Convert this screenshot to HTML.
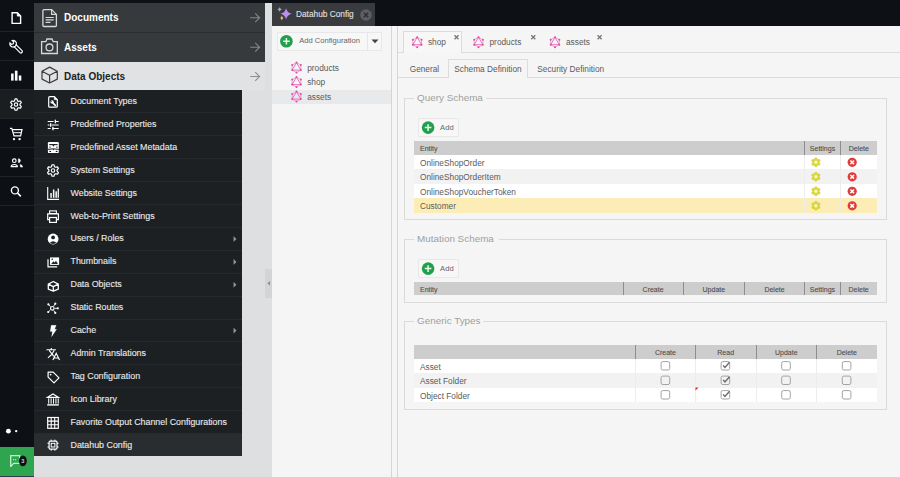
<!DOCTYPE html>
<html><head><meta charset="utf-8"><style>
*{box-sizing:border-box;margin:0;padding:0}
html,body{width:900px;height:477px;overflow:hidden;background:#0d1014;font-family:"Liberation Sans",sans-serif;position:relative}
.a{position:absolute}
.t{position:absolute;white-space:nowrap;line-height:1}
.mmt{font-size:10px;font-weight:bold;color:#fff}
.smt{font-size:8.9px;color:#e8e8e8;-webkit-text-stroke:0.12px #e8e8e8}
.txt{font-size:8.3px;color:#5a5a5a}
.leg{font-size:9.9px;color:#9f9f9f}
.ght{font-size:7px;color:#4a4a4a;-webkit-text-stroke:0.08px #4a4a4a}
.btnt{font-size:7.6px;color:#666}
.btn{position:absolute;background:#f7f7f7;border:1px solid #e8e8e8;border-radius:1px}
.fs{position:absolute;border:1px solid #dadada}
</style></head><body>
<div class="a" style="left:0px;top:0px;width:34px;height:477px;background:#0d1014"></div>
<div class="a" style="left:0px;top:31px;width:34px;height:1px;background:#1f2326"></div>
<div class="a" style="left:0px;top:60px;width:34px;height:1px;background:#1f2326"></div>
<div class="a" style="left:0px;top:89px;width:34px;height:1px;background:#1f2326"></div>
<div class="a" style="left:0px;top:118px;width:34px;height:1px;background:#1f2326"></div>
<div class="a" style="left:0px;top:147px;width:34px;height:1px;background:#1f2326"></div>
<div class="a" style="left:0px;top:176px;width:34px;height:1px;background:#1f2326"></div>
<div class="a" style="left:0px;top:205px;width:34px;height:1px;background:#1f2326"></div>
<div class="a" style="left:0px;top:90px;width:34px;height:28px;background:#1b1e21"></div>
<div class="a" style="left:0px;top:447px;width:34px;height:29px;background:#2fa54f"></div>
<div class="a" style="left:0px;top:476px;width:34px;height:1px;background:#2a3a48"></div>
<div class="a" style="left:34px;top:3px;width:239px;height:474px;background:#dedfe1"></div>
<div class="a" style="left:34px;top:3px;width:231px;height:59px;background:#373a3c"></div>
<div class="a" style="left:34px;top:32px;width:231px;height:1px;background:#2b2d30"></div>
<div class="a" style="left:34px;top:61.8px;width:231px;height:28.2px;background:#e1e2e4"></div>
<span class="t mmt" style="left:64px;top:13px;">Documents</span>
<span class="t mmt" style="left:64px;top:42.6px;">Assets</span>
<span class="t mmt" style="left:64px;top:71.8px;color:#222">Data Objects</span>
<div class="a" style="left:34px;top:90px;width:208px;height:366px;background:#1d2023"></div>
<span class="t smt" style="left:70.5px;top:97.0px;">Document Types</span>
<div class="a" style="left:34px;top:112.4px;width:208px;height:1px;background:#26292d"></div>
<span class="t smt" style="left:70.5px;top:119.9px;">Predefined Properties</span>
<div class="a" style="left:34px;top:135.3px;width:208px;height:1px;background:#26292d"></div>
<span class="t smt" style="left:70.5px;top:142.8px;">Predefined Asset Metadata</span>
<div class="a" style="left:34px;top:158.2px;width:208px;height:1px;background:#26292d"></div>
<span class="t smt" style="left:70.5px;top:165.7px;">System Settings</span>
<div class="a" style="left:34px;top:181.1px;width:208px;height:1px;background:#26292d"></div>
<span class="t smt" style="left:70.5px;top:188.6px;">Website Settings</span>
<div class="a" style="left:34px;top:204.0px;width:208px;height:1px;background:#26292d"></div>
<span class="t smt" style="left:70.5px;top:211.5px;">Web-to-Print Settings</span>
<div class="a" style="left:34px;top:226.9px;width:208px;height:1px;background:#26292d"></div>
<span class="t smt" style="left:70.5px;top:234.4px;">Users / Roles</span>
<div class="a" style="left:34px;top:249.8px;width:208px;height:1px;background:#26292d"></div>
<span class="t smt" style="left:70.5px;top:257.3px;">Thumbnails</span>
<div class="a" style="left:34px;top:272.7px;width:208px;height:1px;background:#26292d"></div>
<span class="t smt" style="left:70.5px;top:280.2px;">Data Objects</span>
<div class="a" style="left:34px;top:295.6px;width:208px;height:1px;background:#26292d"></div>
<span class="t smt" style="left:70.5px;top:303.1px;">Static Routes</span>
<div class="a" style="left:34px;top:318.5px;width:208px;height:1px;background:#26292d"></div>
<span class="t smt" style="left:70.5px;top:326.0px;">Cache</span>
<div class="a" style="left:34px;top:341.4px;width:208px;height:1px;background:#26292d"></div>
<span class="t smt" style="left:70.5px;top:348.9px;">Admin Translations</span>
<div class="a" style="left:34px;top:364.3px;width:208px;height:1px;background:#26292d"></div>
<span class="t smt" style="left:70.5px;top:371.8px;">Tag Configuration</span>
<div class="a" style="left:34px;top:387.2px;width:208px;height:1px;background:#26292d"></div>
<span class="t smt" style="left:70.5px;top:394.7px;">Icon Library</span>
<div class="a" style="left:34px;top:410.1px;width:208px;height:1px;background:#26292d"></div>
<span class="t smt" style="left:70.5px;top:417.6px;">Favorite Output Channel Configurations</span>
<div class="a" style="left:34px;top:433.5px;width:208px;height:22.5px;background:#2a2d30"></div>
<div class="a" style="left:34px;top:433.0px;width:208px;height:1px;background:#26292d"></div>
<span class="t smt" style="left:70.5px;top:440.5px;">Datahub Config</span>
<div class="a" style="left:265px;top:268.8px;width:7px;height:29px;background:#d3d4d6"></div>
<div class="a" style="left:271.6px;top:26px;width:628.4px;height:451px;background:#f5f5f5"></div>
<div class="a" style="left:272px;top:3px;width:103px;height:23px;background:#393b3e"></div>
<span class="t smt" style="left:296px;top:9.8px;font-size:8.3px;color:#dedede">Datahub Config</span>
<div class="a" style="left:391px;top:26px;width:1px;height:451px;background:#d5d5d5"></div>
<div class="a" style="left:397px;top:26px;width:1px;height:451px;background:#d5d5d5"></div>
<div class="btn" style="left:277px;top:32px;width:105px;height:18.5px"></div>
<div class="a" style="left:367px;top:32.5px;width:1px;height:17.5px;background:#e6e6e6"></div>
<span class="t btnt" style="left:299.2px;top:37.3px;">Add Configuration</span>
<div class="a" style="left:272px;top:89.5px;width:119px;height:14.5px;background:#e8e9eb"></div>
<span class="t txt" style="left:307.2px;top:63.5px;">products</span>
<span class="t txt" style="left:307.2px;top:78px;">shop</span>
<span class="t txt" style="left:307.2px;top:92.5px;">assets</span>
<div class="a" style="left:398px;top:52.3px;width:502px;height:1px;background:#dcdcdc"></div>
<div class="a" style="left:403.3px;top:31.2px;width:58.5px;height:22.1px;background:#f7f7f7;border:1px solid #dcdcdc;border-bottom:none"></div>
<span class="t txt" style="left:427.9px;top:38.2px;">shop</span>
<span class="t txt" style="left:489.5px;top:38.2px;">products</span>
<span class="t txt" style="left:566px;top:38.2px;">assets</span>
<div class="a" style="left:398px;top:77px;width:502px;height:1px;background:#dcdcdc"></div>
<div class="a" style="left:447.6px;top:59px;width:80px;height:18.5px;background:#f5f5f5;border:1px solid #dcdcdc;border-bottom:none"></div>
<span class="t txt" style="left:409.7px;top:64.8px;">General</span>
<span class="t txt" style="left:454.3px;top:64.8px;">Schema Definition</span>
<span class="t txt" style="left:537.3px;top:64.8px;">Security Definition</span>
<div class="fs" style="left:404px;top:98.3px;width:483.0px;height:121.7px"></div>
<div class="a" style="left:414px;top:97.3px;width:71.5px;height:3px;background:#f5f5f5"></div>
<span class="t leg" style="left:417px;top:93.2px;">Query Schema</span>
<div class="btn" style="left:417.6px;top:118px;width:41.5px;height:19px"></div>
<span class="t btnt" style="left:440.1px;top:123.7px;">Add</span>
<div class="a" style="left:414px;top:141.2px;width:463px;height:13.5px;background:#cdcdcd"></div>
<div class="a" style="left:804.0px;top:141.2px;width:1px;height:13.5px;background:#8d8d8d"></div>
<div class="a" style="left:840.0px;top:141.2px;width:1px;height:13.5px;background:#8d8d8d"></div>
<span class="t ght" style="left:420px;top:145.3px;">Entity</span>
<span class="t ght" style="left:804.5px;top:145.3px;width:36.0px;text-align:center">Settings</span>
<span class="t ght" style="left:840.5px;top:145.3px;width:36.5px;text-align:center">Delete</span>
<div class="a" style="left:414px;top:154.7px;width:463px;height:14.5px;background:#fff"></div>
<div class="a" style="left:804.0px;top:154.7px;width:1px;height:14.5px;background:#ededed"></div>
<div class="a" style="left:840.0px;top:154.7px;width:1px;height:14.5px;background:#ededed"></div>
<span class="t txt" style="left:420px;top:158.7px;">OnlineShopOrder</span>
<div class="a" style="left:414px;top:169.2px;width:463px;height:14.5px;background:#f2f2f2"></div>
<div class="a" style="left:804.0px;top:169.2px;width:1px;height:14.5px;background:#ededed"></div>
<div class="a" style="left:840.0px;top:169.2px;width:1px;height:14.5px;background:#ededed"></div>
<span class="t txt" style="left:420px;top:173.2px;">OnlineShopOrderItem</span>
<div class="a" style="left:414px;top:183.7px;width:463px;height:14.5px;background:#fff"></div>
<div class="a" style="left:804.0px;top:183.7px;width:1px;height:14.5px;background:#ededed"></div>
<div class="a" style="left:840.0px;top:183.7px;width:1px;height:14.5px;background:#ededed"></div>
<span class="t txt" style="left:420px;top:187.7px;">OnlineShopVoucherToken</span>
<div class="a" style="left:414px;top:198.2px;width:463px;height:14.5px;background:#fcedb6"></div>
<div class="a" style="left:804.0px;top:198.2px;width:1px;height:14.5px;background:#ededed"></div>
<div class="a" style="left:840.0px;top:198.2px;width:1px;height:14.5px;background:#ededed"></div>
<span class="t txt" style="left:420px;top:202.2px;">Customer</span>
<div class="fs" style="left:404px;top:239.2px;width:483.0px;height:63.8px"></div>
<div class="a" style="left:414.2px;top:238.2px;width:84.69999999999999px;height:3px;background:#f5f5f5"></div>
<span class="t leg" style="left:417px;top:234.1px;">Mutation Schema</span>
<div class="btn" style="left:417.6px;top:259px;width:41.5px;height:19px"></div>
<span class="t btnt" style="left:440.1px;top:264.7px;">Add</span>
<div class="a" style="left:414px;top:281.7px;width:463px;height:13.5px;background:#cdcdcd"></div>
<div class="a" style="left:622.5px;top:281.7px;width:1px;height:13.5px;background:#8d8d8d"></div>
<div class="a" style="left:682.7px;top:281.7px;width:1px;height:13.5px;background:#8d8d8d"></div>
<div class="a" style="left:744.0px;top:281.7px;width:1px;height:13.5px;background:#8d8d8d"></div>
<div class="a" style="left:804.0px;top:281.7px;width:1px;height:13.5px;background:#8d8d8d"></div>
<div class="a" style="left:839.8px;top:281.7px;width:1px;height:13.5px;background:#8d8d8d"></div>
<span class="t ght" style="left:420px;top:285.8px;">Entity</span>
<span class="t ght" style="left:623px;top:285.8px;width:60.2px;text-align:center">Create</span>
<span class="t ght" style="left:683.2px;top:285.8px;width:61.3px;text-align:center">Update</span>
<span class="t ght" style="left:744.5px;top:285.8px;width:60.0px;text-align:center">Delete</span>
<span class="t ght" style="left:804.5px;top:285.8px;width:35.8px;text-align:center">Settings</span>
<span class="t ght" style="left:840.3px;top:285.8px;width:36.7px;text-align:center">Delete</span>
<div class="fs" style="left:404px;top:321.3px;width:483.0px;height:88.7px"></div>
<div class="a" style="left:414px;top:320.3px;width:69px;height:3px;background:#f5f5f5"></div>
<span class="t leg" style="left:417px;top:316.2px;">Generic Types</span>
<div class="a" style="left:414px;top:345.1px;width:463px;height:13.5px;background:#cdcdcd"></div>
<div class="a" style="left:634.9px;top:345.1px;width:1px;height:13.5px;background:#8d8d8d"></div>
<div class="a" style="left:694.9px;top:345.1px;width:1px;height:13.5px;background:#8d8d8d"></div>
<div class="a" style="left:755.5px;top:345.1px;width:1px;height:13.5px;background:#8d8d8d"></div>
<div class="a" style="left:816.1px;top:345.1px;width:1px;height:13.5px;background:#8d8d8d"></div>
<span class="t ght" style="left:635.4px;top:349.2px;width:60.0px;text-align:center">Create</span>
<span class="t ght" style="left:695.4px;top:349.2px;width:60.6px;text-align:center">Read</span>
<span class="t ght" style="left:756px;top:349.2px;width:60.6px;text-align:center">Update</span>
<span class="t ght" style="left:816.6px;top:349.2px;width:60.4px;text-align:center">Delete</span>
<div class="a" style="left:414px;top:358.6px;width:463px;height:14.5px;background:#fff"></div>
<div class="a" style="left:634.9px;top:358.6px;width:1px;height:14.5px;background:#ededed"></div>
<div class="a" style="left:694.9px;top:358.6px;width:1px;height:14.5px;background:#ededed"></div>
<div class="a" style="left:755.5px;top:358.6px;width:1px;height:14.5px;background:#ededed"></div>
<div class="a" style="left:816.1px;top:358.6px;width:1px;height:14.5px;background:#ededed"></div>
<span class="t txt" style="left:420px;top:362.6px;">Asset</span>
<div class="a" style="left:414px;top:373.1px;width:463px;height:14.5px;background:#f2f2f2"></div>
<div class="a" style="left:634.9px;top:373.1px;width:1px;height:14.5px;background:#ededed"></div>
<div class="a" style="left:694.9px;top:373.1px;width:1px;height:14.5px;background:#ededed"></div>
<div class="a" style="left:755.5px;top:373.1px;width:1px;height:14.5px;background:#ededed"></div>
<div class="a" style="left:816.1px;top:373.1px;width:1px;height:14.5px;background:#ededed"></div>
<span class="t txt" style="left:420px;top:377.1px;">Asset Folder</span>
<div class="a" style="left:414px;top:387.6px;width:463px;height:14.5px;background:#fff"></div>
<div class="a" style="left:634.9px;top:387.6px;width:1px;height:14.5px;background:#ededed"></div>
<div class="a" style="left:694.9px;top:387.6px;width:1px;height:14.5px;background:#ededed"></div>
<div class="a" style="left:755.5px;top:387.6px;width:1px;height:14.5px;background:#ededed"></div>
<div class="a" style="left:816.1px;top:387.6px;width:1px;height:14.5px;background:#ededed"></div>
<span class="t txt" style="left:420px;top:391.6px;">Object Folder</span>
<svg class="a" style="left:0;top:0" width="900" height="477" viewBox="0 0 900 477"><path d="M12.1,12.8 L17.3,12.8 L20.6,16.1 L20.6,23.4 L12.1,23.4 Z" stroke="#fff" stroke-width="1.4" fill="none" /><path d="M17.3,12.8 L17.3,16.1 L20.6,16.1 Z" stroke="#fff" stroke-width="0.8" fill="#fff" /><g transform="rotate(-45 16.6 47.2)"><path d="M15.2,44.6 L15.2,53.5 Q15.2,54.7 16.6,54.7 Q18,54.7 18,53.5 L18,44.6" stroke="#fff" stroke-width="1.2" fill="none" /><path d="M15,39.4 A3.3,3.3 0 1 0 18.2,39.4 L18.2,41.5 L16.6,42.4 L15,41.5 Z" stroke="#fff" stroke-width="1.2" fill="none" /></g><rect x="11.1" y="73.5" width="2.5" height="7.1" rx="0" stroke="none" stroke-width="1" fill="#fff"/><rect x="14.9" y="70.7" width="2.6" height="9.9" rx="0" stroke="none" stroke-width="1" fill="#fff"/><rect x="18.8" y="75.5" width="2.5" height="5.1" rx="0" stroke="none" stroke-width="1" fill="#fff"/><path d="M19.97,105.10 L21.32,106.64 L20.43,108.19 L18.42,107.79 L17.55,108.29 L16.89,110.23 L15.11,110.23 L14.45,108.29 L13.58,107.79 L11.57,108.19 L10.68,106.64 L12.03,105.10 L12.03,104.10 L10.68,102.56 L11.57,101.01 L13.58,101.41 L14.45,100.91 L15.11,98.97 L16.89,98.97 L17.55,100.91 L18.42,101.41 L20.43,101.01 L21.32,102.56 L19.97,104.10 Z" stroke="#fff" stroke-width="1.2" fill="none" stroke-linejoin="round"/><circle cx="16" cy="104.6" r="1.7" stroke="#fff" stroke-width="1.1" fill="none"/><path d="M9.9,128.4 L11.8,128.4 L14,135.8 L20.6,135.8 L22,129.6 L12.6,129.6" stroke="#fff" stroke-width="1.2" fill="none" /><path d="M13.3,132.7 L21.1,132.7" stroke="#fff" stroke-width="1.0" fill="none" /><circle cx="14" cy="139.1" r="1.2" stroke="none" stroke-width="1" fill="#fff"/><circle cx="19.6" cy="139.1" r="1.2" stroke="none" stroke-width="1" fill="#fff"/><circle cx="14.3" cy="160.7" r="1.8" stroke="#fff" stroke-width="1.2" fill="none"/><path d="M11.2,166.6 Q11.2,164.5 14.3,164.5 Q17.4,164.5 17.4,166.6 Z" stroke="#fff" stroke-width="1.1" fill="none" /><path d="M18.4,158.7 A2,2 0 0 1 18.4,162.7 Z" stroke="#fff" stroke-width="0.5" fill="#fff" /><path d="M20,164.6 Q22.6,164.8 22.6,167.1 L20.6,167.1 Z" stroke="#fff" stroke-width="0.5" fill="#fff" /><circle cx="14.9" cy="190.4" r="3.5" stroke="#fff" stroke-width="1.4" fill="none"/><path d="M17.5,193 L20.8,196.3" stroke="#fff" stroke-width="1.7" fill="none" /><circle cx="8.4" cy="431.2" r="2.4" stroke="none" stroke-width="1" fill="#fff"/><circle cx="16.2" cy="431.1" r="1.2" stroke="none" stroke-width="1" fill="#fff"/><path d="M10.7,455.7 L19.6,455.7 L19.6,463.4 L13.6,463.4 L10.9,466.4 L10.7,466.4 Z" stroke="#c2f2ca" stroke-width="1.3" fill="none" /><circle cx="13.6" cy="459.7" r="0.6" stroke="none" stroke-width="1" fill="#c2f2ca"/><circle cx="15.6" cy="459.7" r="0.6" stroke="none" stroke-width="1" fill="#c2f2ca"/><ellipse cx="22.9" cy="460.9" rx="3.9" ry="5.4" fill="#0d1014"/><text x="22.9" y="463" font-size="5.6" font-weight="bold" fill="#d0d0d8" text-anchor="middle" font-family="Liberation Sans">3</text><path d="M44,9.6 L51.6,9.6 L56.4,14.4 L56.4,25.4 Q56.4,26.5 55.3,26.5 L44,26.5 Q42.9,26.5 42.9,25.4 L42.9,10.7 Q42.9,9.6 44,9.6 Z" stroke="#d8d8d8" stroke-width="1.3" fill="none" /><path d="M51.6,9.6 L51.6,14.4 L56.4,14.4" stroke="#d8d8d8" stroke-width="1.2" fill="none" /><path d="M45.6,17.5 L53.7,17.5 M45.6,19.9 L53.7,19.9 M45.6,22.3 L50.5,22.3" stroke="#d8d8d8" stroke-width="1.2" fill="none" /><path d="M41.6,41.7 L45.8,41.7 L47,39 L52,39 L53.2,41.7 L57.3,41.7 L57.3,53.5 L41.6,53.5 Z" stroke="#d8d8d8" stroke-width="1.3" fill="none" /><circle cx="49.5" cy="47.4" r="3.4" stroke="#d8d8d8" stroke-width="1.3" fill="none"/><path d="M49.6,67.1 L57.3,71.2 L57.3,79.1 L49.6,83 L42,79.1 L42,71.2 Z M42,71.2 L49.6,75.3 L57.3,71.2 M49.6,75.3 L49.6,83" stroke="#3a3b3d" stroke-width="1.2" fill="none" stroke-linejoin="round"/><path d="M250.2,17.8 L259.6,17.8 M255.2,13.4 L259.6,17.8 L255.2,22.200000000000003" stroke="#85878a" stroke-width="1.1" fill="none" /><path d="M250.2,47.2 L259.6,47.2 M255.2,42.800000000000004 L259.6,47.2 L255.2,51.6" stroke="#85878a" stroke-width="1.1" fill="none" /><path d="M250.2,76.5 L259.6,76.5 M255.2,72.1 L259.6,76.5 L255.2,80.9" stroke="#8e8f91" stroke-width="1.1" fill="none" /><path d="M49.8,96.7 L54.3,96.7 L57.3,99.7 L57.3,106.2 Q57.3,107.2 56.3,107.2 L49.7,107.2 Q48.7,107.2 48.7,106.2 L48.7,97.8 Q48.7,96.7 49.8,96.7 Z" stroke="#fff" stroke-width="1.2" fill="none" /><path d="M54.3,96.7 L54.3,99.7 L57.3,99.7 Z" stroke="#fff" stroke-width="0.5" fill="#fff" /><path d="M52.6,102.6 L55.3,105.4" stroke="#fff" stroke-width="1.7" fill="none" stroke-linecap="round"/><circle cx="52.1" cy="101.9" r="1.7" stroke="none" stroke-width="1" fill="#fff"/><path d="M50.3,100.6 L51.6,101.9" stroke="#1d2023" stroke-width="1.0" fill="none" /><path d="M47.7,121.5 L53.6,121.5 M55.9,121.5 L58.7,121.5 M47.7,125 L49.5,125 M51.6,125 L58.7,125 M47.7,128.5 L50.7,128.5 M52.3,128.5 L58.7,128.5" stroke="#fff" stroke-width="1.1" fill="none" /><rect x="54.7" y="119.7" width="1.3" height="3.6" rx="0" stroke="none" stroke-width="1" fill="#fff"/><rect x="50" y="123.2" width="1.3" height="3.6" rx="0" stroke="none" stroke-width="1" fill="#fff"/><rect x="52.3" y="126.7" width="1.3" height="3.6" rx="0" stroke="none" stroke-width="1" fill="#fff"/><rect x="47.9" y="142" width="10.9" height="11.1" rx="1.2" stroke="none" stroke-width="1" fill="#fff"/><path d="M49.2,144.6 L57.6,144.6" stroke="#1d2023" stroke-width="1.1" fill="none" /><path d="M52,144.4 L54.8,144.4 L53.4,146.8 Z" stroke="none" stroke-width="0" fill="#1d2023" /><rect x="49.3" y="146.6" width="1.3" height="1.1" rx="0" stroke="none" stroke-width="1" fill="#1d2023"/><rect x="56.2" y="146.6" width="1.3" height="1.1" rx="0" stroke="none" stroke-width="1" fill="#1d2023"/><path d="M47.9,149.4 Q53.4,148.2 58.8,149.4" stroke="#1d2023" stroke-width="1.0" fill="none" /><path d="M52.6,149 L54.2,149 L53.4,150.4 Z" stroke="none" stroke-width="0" fill="#1d2023" /><ellipse cx="50.2" cy="151.4" rx="1" ry="0.6" fill="#1d2023"/><ellipse cx="56.6" cy="151.4" rx="1" ry="0.6" fill="#1d2023"/><path d="M57.07,171.01 L58.41,172.58 L57.51,174.15 L55.48,173.77 L54.59,174.28 L53.91,176.23 L52.09,176.23 L51.41,174.28 L50.52,173.77 L48.49,174.15 L47.59,172.58 L48.93,171.01 L48.93,169.99 L47.59,168.42 L48.49,166.85 L50.52,167.23 L51.41,166.72 L52.09,164.77 L53.91,164.77 L54.59,166.72 L55.48,167.23 L57.51,166.85 L58.41,168.42 L57.07,169.99 Z" stroke="#fff" stroke-width="1.2" fill="none" stroke-linejoin="round"/><circle cx="53" cy="170.5" r="1.7" stroke="#fff" stroke-width="1.1" fill="none"/><path d="M47.7,187 L47.7,199.4 L59.1,199.4" stroke="#fff" stroke-width="1.1" fill="none" /><rect x="50.3" y="193" width="1.5" height="4.8" rx="0" stroke="none" stroke-width="1" fill="#fff"/><rect x="52.9" y="189.5" width="1.5" height="8.3" rx="0" stroke="none" stroke-width="1" fill="#fff"/><rect x="55.4" y="191.3" width="1.5" height="6.5" rx="0" stroke="none" stroke-width="1" fill="#fff"/><rect x="57.6" y="188.5" width="1.3" height="9.3" rx="0" stroke="none" stroke-width="1" fill="#fff"/><rect x="49.6" y="210.9" width="6.8" height="2.6" rx="0" stroke="#fff" stroke-width="1.1" fill="none"/><path d="M49.4,219.6 L47.7,219.6 L47.7,213.8 L58.4,213.8 L58.4,219.6 L56.6,219.6" stroke="#fff" stroke-width="1.2" fill="none" /><rect x="49.6" y="217.5" width="6.8" height="4.9" rx="0" stroke="#fff" stroke-width="1.2" fill="none"/><circle cx="53.1" cy="239" r="5.4" stroke="none" stroke-width="1" fill="#fff"/><circle cx="53.1" cy="237.4" r="1.9" stroke="none" stroke-width="1" fill="#1d2023"/><path d="M49.6,242.8 Q53.1,239.8 56.6,242.8 Q53.1,245.2 49.6,242.8 Z" stroke="#fff" stroke-width="0.1" fill="#1d2023" /><path d="M48,259.3 L48,266.8 L57.2,266.8" stroke="#fff" stroke-width="1.2" fill="none" /><rect x="50" y="257.4" width="9.1" height="7.5" rx="0" stroke="none" stroke-width="1" fill="#fff"/><path d="M51.2,264 L53.3,261.3 L54.6,262.6 L56,260.8 L58,264 Z" stroke="#fff" stroke-width="0.1" fill="#1d2023" /><circle cx="52.2" cy="259.3" r="0.8" stroke="none" stroke-width="1" fill="#1d2023"/><path d="M53.3,281.5 L58.3,284.1 L58.3,289.2 L53.3,291.2 L48.3,289.2 L48.3,284.1 Z M48.3,284.1 L53.3,286.6 L58.3,284.1 M53.3,286.6 L53.3,291.2" stroke="#fff" stroke-width="1.3" fill="none" stroke-linejoin="round"/><circle cx="52.3" cy="308.3" r="1.8" stroke="#fff" stroke-width="1.2" fill="none"/><path d="M50.46,306.46 L48.41,304.41" stroke="#fff" stroke-width="0.9" fill="none" /><circle cx="48.41" cy="304.41" r="1.1" stroke="none" stroke-width="1" fill="#fff"/><path d="M53.72,306.12 L55.30,303.69" stroke="#fff" stroke-width="0.9" fill="none" /><circle cx="55.3" cy="303.69" r="1.1" stroke="none" stroke-width="1" fill="#fff"/><path d="M54.90,308.30 L57.80,308.30" stroke="#fff" stroke-width="0.9" fill="none" /><circle cx="57.8" cy="308.3" r="1.1" stroke="none" stroke-width="1" fill="#fff"/><path d="M53.72,310.48 L55.30,312.91" stroke="#fff" stroke-width="0.9" fill="none" /><circle cx="55.3" cy="312.91" r="1.1" stroke="none" stroke-width="1" fill="#fff"/><path d="M50.37,310.04 L48.21,311.98" stroke="#fff" stroke-width="0.9" fill="none" /><circle cx="48.21" cy="311.98" r="1.1" stroke="none" stroke-width="1" fill="#fff"/><path d="M51.2,325.3 L56.2,325.3 L54.6,329.3 L56.6,329.3 L51.6,336.7 L52.4,331.4 L50.2,331.4 Z" stroke="#fff" stroke-width="0.2" fill="#fff" /><path d="M46.4,349.7 L55.9,349.7 M51.3,348 L51.3,349.7 M49.2,350.4 L53.8,356.3 M54.2,350.4 Q52,355.2 47.9,357.9" stroke="#fff" stroke-width="1.1" fill="none" /><path d="M52.9,360 L56.2,353.3 L59.5,360 M54,358 L58.4,358" stroke="#fff" stroke-width="1.2" fill="none" /><path d="M48.1,372.1 L53.2,372.1 L59,377.9 L54,382.9 L48.1,377.1 Z" stroke="#fff" stroke-width="1.2" fill="none" stroke-linejoin="round"/><circle cx="50.6" cy="374.6" r="0.9" stroke="none" stroke-width="1" fill="#fff"/><path d="M47.6,397.3 L53,393.9 L58.4,397.3 Z" stroke="#fff" stroke-width="1.2" fill="none" /><rect x="47.2" y="404.2" width="11.6" height="1.4" rx="0" stroke="none" stroke-width="1" fill="#fff"/><rect x="48.2" y="398.3" width="1.05" height="5.4" rx="0" stroke="none" stroke-width="1" fill="#fff"/><rect x="50.6" y="398.3" width="1.05" height="5.4" rx="0" stroke="none" stroke-width="1" fill="#fff"/><rect x="53" y="398.3" width="1.05" height="5.4" rx="0" stroke="none" stroke-width="1" fill="#fff"/><rect x="55.4" y="398.3" width="1.05" height="5.4" rx="0" stroke="none" stroke-width="1" fill="#fff"/><rect x="57.7" y="398.3" width="1.05" height="5.4" rx="0" stroke="none" stroke-width="1" fill="#fff"/><rect x="47.7" y="417.5" width="10.6" height="10.8" rx="0" stroke="#fff" stroke-width="1.2" fill="none"/><path d="M51.2,417.5 L51.2,428.3 M54.7,417.5 L54.7,428.3 M47.7,421.1 L58.3,421.1 M47.7,424.7 L58.3,424.7" stroke="#fff" stroke-width="1.1" fill="none" /><rect x="49.1" y="441.2" width="7.9" height="7.9" rx="1" stroke="#fff" stroke-width="1.2" fill="none"/><rect x="51.2" y="443.3" width="3.7" height="3.7" rx="0" stroke="#fff" stroke-width="1" fill="none"/><path d="M47.5,443.3 L49.1,443.3 M47.5,447 L49.1,447 M57,443.3 L58.6,443.3 M57,447 L58.6,447 M51.2,439.6 L51.2,441.2 M54.9,439.6 L54.9,441.2 M51.2,449.1 L51.2,450.7 M54.9,449.1 L54.9,450.7" stroke="#fff" stroke-width="1" fill="none" /><path d="M233.6,236.2 L236.4,239 L233.6,241.8 Z" stroke="#999" stroke-width="0.1" fill="#999" /><path d="M233.6,259.09999999999997 L236.4,261.9 L233.6,264.7 Z" stroke="#999" stroke-width="0.1" fill="#999" /><path d="M233.6,282.0 L236.4,284.8 L233.6,287.6 Z" stroke="#999" stroke-width="0.1" fill="#999" /><path d="M233.6,327.8 L236.4,330.6 L233.6,333.40000000000003 Z" stroke="#999" stroke-width="0.1" fill="#999" /><path d="M269.9,281 L267.6,283.3 L269.9,285.6 Z" stroke="#8a8a8a" stroke-width="0.1" fill="#8a8a8a" /><path d="M286.1,8.200000000000001 Q287.22,12.680000000000001 291.70000000000005,13.8 Q287.22,14.92 286.1,19.4 Q284.98,14.92 280.5,13.8 Q284.98,12.680000000000001 286.1,8.200000000000001 Z" stroke="none" stroke-width="0" fill="#b890e8" /><path d="M279.6,7.3 Q280.216,8.884 281.8,9.5 Q280.216,10.116 279.6,11.7 Q278.98400000000004,10.116 277.40000000000003,9.5 Q278.98400000000004,8.884 279.6,7.3 Z" stroke="none" stroke-width="0" fill="#8fb0c8" /><path d="M281.8,15.6 Q282.4,17.5 283.4,18.1 Q282.4,18.7 281.8,20.6 Q281.2,18.7 280.2,18.1 Q281.2,17.5 281.8,15.6 Z" fill="#e6b862"/><circle cx="366" cy="15" r="5.8" stroke="none" stroke-width="1" fill="#5c5e61"/><path d="M363.8,12.8 L368.2,17.2 M368.2,12.8 L363.8,17.2" stroke="#2c2e31" stroke-width="1.4" fill="none" /><circle cx="286.4" cy="41.2" r="6.3" stroke="none" stroke-width="1" fill="#20a04c"/><path d="M283.09999999999997,41.2 L289.7,41.2 M286.4,37.900000000000006 L286.4,44.5" stroke="#e8fbe9" stroke-width="1.5" fill="none" /><circle cx="428.1" cy="127.6" r="6.3" stroke="none" stroke-width="1" fill="#20a04c"/><path d="M424.8,127.6 L431.40000000000003,127.6 M428.1,124.3 L428.1,130.9" stroke="#e8fbe9" stroke-width="1.5" fill="none" /><circle cx="428.1" cy="268.6" r="6.3" stroke="none" stroke-width="1" fill="#20a04c"/><path d="M424.8,268.6 L431.40000000000003,268.6 M428.1,265.3 L428.1,271.90000000000003" stroke="#e8fbe9" stroke-width="1.5" fill="none" /><path d="M371.5,39.6 L378.5,39.6 L375,43.2 Z" stroke="none" stroke-width="0" fill="#444" /><path d="M296.50,62.60 L300.83,65.10 L300.83,70.10 L296.50,72.60 L292.17,70.10 L292.17,65.10 Z" stroke="#e04ba8" stroke-width="0.6" fill="none" stroke-opacity="0.8"/><path d="M296.50,62.60 L300.83,70.10 L292.17,70.10 Z" stroke="#e04ba8" stroke-width="0.75" fill="none" /><circle cx="296.5" cy="62.6" r="1.0" stroke="none" stroke-width="1" fill="#e04ba8"/><circle cx="300.83" cy="65.1" r="1.0" stroke="none" stroke-width="1" fill="#e04ba8"/><circle cx="300.83" cy="70.1" r="1.0" stroke="none" stroke-width="1" fill="#e04ba8"/><circle cx="296.5" cy="72.6" r="1.0" stroke="none" stroke-width="1" fill="#e04ba8"/><circle cx="292.17" cy="70.1" r="1.0" stroke="none" stroke-width="1" fill="#e04ba8"/><circle cx="292.17" cy="65.1" r="1.0" stroke="none" stroke-width="1" fill="#e04ba8"/><path d="M296.50,77.10 L300.83,79.60 L300.83,84.60 L296.50,87.10 L292.17,84.60 L292.17,79.60 Z" stroke="#e04ba8" stroke-width="0.6" fill="none" stroke-opacity="0.8"/><path d="M296.50,77.10 L300.83,84.60 L292.17,84.60 Z" stroke="#e04ba8" stroke-width="0.75" fill="none" /><circle cx="296.5" cy="77.1" r="1.0" stroke="none" stroke-width="1" fill="#e04ba8"/><circle cx="300.83" cy="79.6" r="1.0" stroke="none" stroke-width="1" fill="#e04ba8"/><circle cx="300.83" cy="84.6" r="1.0" stroke="none" stroke-width="1" fill="#e04ba8"/><circle cx="296.5" cy="87.1" r="1.0" stroke="none" stroke-width="1" fill="#e04ba8"/><circle cx="292.17" cy="84.6" r="1.0" stroke="none" stroke-width="1" fill="#e04ba8"/><circle cx="292.17" cy="79.6" r="1.0" stroke="none" stroke-width="1" fill="#e04ba8"/><path d="M296.50,91.60 L300.83,94.10 L300.83,99.10 L296.50,101.60 L292.17,99.10 L292.17,94.10 Z" stroke="#e04ba8" stroke-width="0.6" fill="none" stroke-opacity="0.8"/><path d="M296.50,91.60 L300.83,99.10 L292.17,99.10 Z" stroke="#e04ba8" stroke-width="0.75" fill="none" /><circle cx="296.5" cy="91.6" r="1.0" stroke="none" stroke-width="1" fill="#e04ba8"/><circle cx="300.83" cy="94.1" r="1.0" stroke="none" stroke-width="1" fill="#e04ba8"/><circle cx="300.83" cy="99.1" r="1.0" stroke="none" stroke-width="1" fill="#e04ba8"/><circle cx="296.5" cy="101.6" r="1.0" stroke="none" stroke-width="1" fill="#e04ba8"/><circle cx="292.17" cy="99.1" r="1.0" stroke="none" stroke-width="1" fill="#e04ba8"/><circle cx="292.17" cy="94.1" r="1.0" stroke="none" stroke-width="1" fill="#e04ba8"/><path d="M417.20,37.20 L421.53,39.70 L421.53,44.70 L417.20,47.20 L412.87,44.70 L412.87,39.70 Z" stroke="#e04ba8" stroke-width="0.6" fill="none" stroke-opacity="0.8"/><path d="M417.20,37.20 L421.53,44.70 L412.87,44.70 Z" stroke="#e04ba8" stroke-width="0.75" fill="none" /><circle cx="417.2" cy="37.2" r="1.0" stroke="none" stroke-width="1" fill="#e04ba8"/><circle cx="421.53" cy="39.7" r="1.0" stroke="none" stroke-width="1" fill="#e04ba8"/><circle cx="421.53" cy="44.7" r="1.0" stroke="none" stroke-width="1" fill="#e04ba8"/><circle cx="417.2" cy="47.2" r="1.0" stroke="none" stroke-width="1" fill="#e04ba8"/><circle cx="412.87" cy="44.7" r="1.0" stroke="none" stroke-width="1" fill="#e04ba8"/><circle cx="412.87" cy="39.7" r="1.0" stroke="none" stroke-width="1" fill="#e04ba8"/><path d="M478.50,37.20 L482.83,39.70 L482.83,44.70 L478.50,47.20 L474.17,44.70 L474.17,39.70 Z" stroke="#e04ba8" stroke-width="0.6" fill="none" stroke-opacity="0.8"/><path d="M478.50,37.20 L482.83,44.70 L474.17,44.70 Z" stroke="#e04ba8" stroke-width="0.75" fill="none" /><circle cx="478.5" cy="37.2" r="1.0" stroke="none" stroke-width="1" fill="#e04ba8"/><circle cx="482.83" cy="39.7" r="1.0" stroke="none" stroke-width="1" fill="#e04ba8"/><circle cx="482.83" cy="44.7" r="1.0" stroke="none" stroke-width="1" fill="#e04ba8"/><circle cx="478.5" cy="47.2" r="1.0" stroke="none" stroke-width="1" fill="#e04ba8"/><circle cx="474.17" cy="44.7" r="1.0" stroke="none" stroke-width="1" fill="#e04ba8"/><circle cx="474.17" cy="39.7" r="1.0" stroke="none" stroke-width="1" fill="#e04ba8"/><path d="M555.00,37.20 L559.33,39.70 L559.33,44.70 L555.00,47.20 L550.67,44.70 L550.67,39.70 Z" stroke="#e04ba8" stroke-width="0.6" fill="none" stroke-opacity="0.8"/><path d="M555.00,37.20 L559.33,44.70 L550.67,44.70 Z" stroke="#e04ba8" stroke-width="0.75" fill="none" /><circle cx="555.0" cy="37.2" r="1.0" stroke="none" stroke-width="1" fill="#e04ba8"/><circle cx="559.33" cy="39.7" r="1.0" stroke="none" stroke-width="1" fill="#e04ba8"/><circle cx="559.33" cy="44.7" r="1.0" stroke="none" stroke-width="1" fill="#e04ba8"/><circle cx="555.0" cy="47.2" r="1.0" stroke="none" stroke-width="1" fill="#e04ba8"/><circle cx="550.67" cy="44.7" r="1.0" stroke="none" stroke-width="1" fill="#e04ba8"/><circle cx="550.67" cy="39.7" r="1.0" stroke="none" stroke-width="1" fill="#e04ba8"/><path d="M454.5,35.2 L458.5,39.2 M458.5,35.2 L454.5,39.2" stroke="#777" stroke-width="1.3" fill="none" /><path d="M531.3,35.2 L535.3,39.2 M535.3,35.2 L531.3,39.2" stroke="#777" stroke-width="1.3" fill="none" /><path d="M597.6,35.2 L601.6,39.2 M601.6,35.2 L597.6,39.2" stroke="#777" stroke-width="1.3" fill="none" /><path d="M818.98,162.69 L820.10,163.62 L819.14,165.28 L817.77,164.77 L817.10,165.16 L816.86,166.59 L814.94,166.59 L814.70,165.16 L814.03,164.77 L812.66,165.28 L811.70,163.62 L812.82,162.69 L812.82,161.91 L811.70,160.98 L812.66,159.32 L814.03,159.83 L814.70,159.44 L814.94,158.01 L816.86,158.01 L817.10,159.44 L817.77,159.83 L819.14,159.32 L820.10,160.98 L818.98,161.91 Z" stroke="#d4d236" stroke-width="0.8" fill="#d8d63e" stroke-linejoin="round"/><circle cx="815.9" cy="162.3" r="1.7" stroke="none" stroke-width="1" fill="#faf6b8"/><circle cx="852.2" cy="162.3" r="4.6" stroke="none" stroke-width="1" fill="#e03a3a"/><path d="M850.4000000000001,160.5 L854.0,164.10000000000002 M854.0,160.5 L850.4000000000001,164.10000000000002" stroke="#fff" stroke-width="1.5" fill="none" /><path d="M818.98,177.19 L820.10,178.12 L819.14,179.78 L817.77,179.27 L817.10,179.66 L816.86,181.09 L814.94,181.09 L814.70,179.66 L814.03,179.27 L812.66,179.78 L811.70,178.12 L812.82,177.19 L812.82,176.41 L811.70,175.48 L812.66,173.82 L814.03,174.33 L814.70,173.94 L814.94,172.51 L816.86,172.51 L817.10,173.94 L817.77,174.33 L819.14,173.82 L820.10,175.48 L818.98,176.41 Z" stroke="#d4d236" stroke-width="0.8" fill="#d8d63e" stroke-linejoin="round"/><circle cx="815.9" cy="176.8" r="1.7" stroke="none" stroke-width="1" fill="#faf6b8"/><circle cx="852.2" cy="176.8" r="4.6" stroke="none" stroke-width="1" fill="#e03a3a"/><path d="M850.4000000000001,175.0 L854.0,178.60000000000002 M854.0,175.0 L850.4000000000001,178.60000000000002" stroke="#fff" stroke-width="1.5" fill="none" /><path d="M818.98,191.69 L820.10,192.62 L819.14,194.28 L817.77,193.77 L817.10,194.16 L816.86,195.59 L814.94,195.59 L814.70,194.16 L814.03,193.77 L812.66,194.28 L811.70,192.62 L812.82,191.69 L812.82,190.91 L811.70,189.98 L812.66,188.32 L814.03,188.83 L814.70,188.44 L814.94,187.01 L816.86,187.01 L817.10,188.44 L817.77,188.83 L819.14,188.32 L820.10,189.98 L818.98,190.91 Z" stroke="#d4d236" stroke-width="0.8" fill="#d8d63e" stroke-linejoin="round"/><circle cx="815.9" cy="191.3" r="1.7" stroke="none" stroke-width="1" fill="#faf6b8"/><circle cx="852.2" cy="191.3" r="4.6" stroke="none" stroke-width="1" fill="#e03a3a"/><path d="M850.4000000000001,189.5 L854.0,193.10000000000002 M854.0,189.5 L850.4000000000001,193.10000000000002" stroke="#fff" stroke-width="1.5" fill="none" /><path d="M818.98,206.19 L820.10,207.12 L819.14,208.78 L817.77,208.27 L817.10,208.66 L816.86,210.09 L814.94,210.09 L814.70,208.66 L814.03,208.27 L812.66,208.78 L811.70,207.12 L812.82,206.19 L812.82,205.41 L811.70,204.48 L812.66,202.82 L814.03,203.33 L814.70,202.94 L814.94,201.51 L816.86,201.51 L817.10,202.94 L817.77,203.33 L819.14,202.82 L820.10,204.48 L818.98,205.41 Z" stroke="#d4d236" stroke-width="0.8" fill="#d8d63e" stroke-linejoin="round"/><circle cx="815.9" cy="205.8" r="1.7" stroke="none" stroke-width="1" fill="#faf6b8"/><circle cx="852.2" cy="205.8" r="4.6" stroke="none" stroke-width="1" fill="#e03a3a"/><path d="M850.4000000000001,204.0 L854.0,207.60000000000002 M854.0,204.0 L850.4000000000001,207.60000000000002" stroke="#fff" stroke-width="1.5" fill="none" /><rect x="661.1" y="361.6" width="8.6" height="8.4" rx="1.6" stroke="#a3a3a3" stroke-width="1" fill="none"/><rect x="721.1" y="361.6" width="8.6" height="8.4" rx="1.6" stroke="#a3a3a3" stroke-width="1" fill="none"/><path d="M723.1,365.40000000000003 L724.9,367.5 L729.6,362.2" stroke="#6a6a6a" stroke-width="1.4" fill="none" /><rect x="781.7" y="361.6" width="8.6" height="8.4" rx="1.6" stroke="#a3a3a3" stroke-width="1" fill="none"/><rect x="842.3" y="361.6" width="8.6" height="8.4" rx="1.6" stroke="#a3a3a3" stroke-width="1" fill="none"/><rect x="661.1" y="376.1" width="8.6" height="8.4" rx="1.6" stroke="#a3a3a3" stroke-width="1" fill="none"/><rect x="721.1" y="376.1" width="8.6" height="8.4" rx="1.6" stroke="#a3a3a3" stroke-width="1" fill="none"/><path d="M723.1,379.90000000000003 L724.9,382.0 L729.6,376.7" stroke="#6a6a6a" stroke-width="1.4" fill="none" /><rect x="781.7" y="376.1" width="8.6" height="8.4" rx="1.6" stroke="#a3a3a3" stroke-width="1" fill="none"/><rect x="842.3" y="376.1" width="8.6" height="8.4" rx="1.6" stroke="#a3a3a3" stroke-width="1" fill="none"/><rect x="661.1" y="390.6" width="8.6" height="8.4" rx="1.6" stroke="#a3a3a3" stroke-width="1" fill="none"/><rect x="721.1" y="390.6" width="8.6" height="8.4" rx="1.6" stroke="#a3a3a3" stroke-width="1" fill="none"/><path d="M723.1,394.40000000000003 L724.9,396.5 L729.6,391.2" stroke="#6a6a6a" stroke-width="1.4" fill="none" /><rect x="781.7" y="390.6" width="8.6" height="8.4" rx="1.6" stroke="#a3a3a3" stroke-width="1" fill="none"/><rect x="842.3" y="390.6" width="8.6" height="8.4" rx="1.6" stroke="#a3a3a3" stroke-width="1" fill="none"/><path d="M695.5,387.5 L698.5,387.5 L695.5,390.5 Z" stroke="none" stroke-width="0" fill="#e02020" /></svg>
</body></html>
